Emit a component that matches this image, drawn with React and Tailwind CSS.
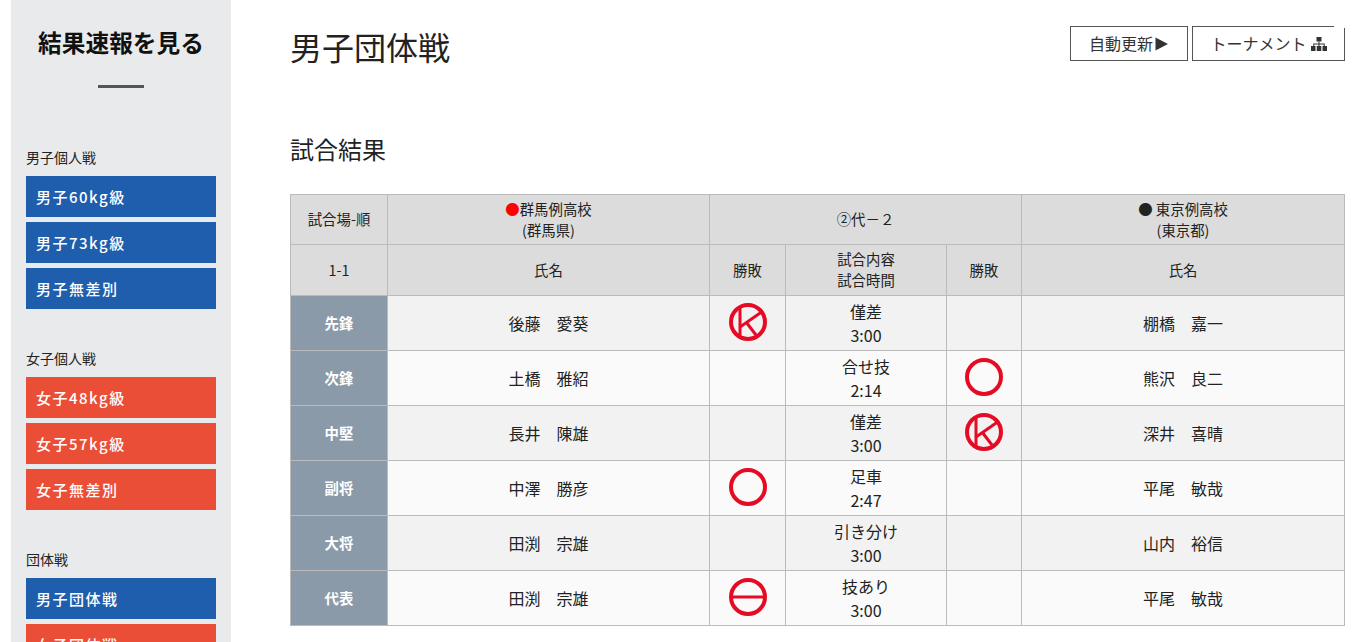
import React from "react";

const JP = "font-['Noto_Sans_CJK_JP','Noto_Sans',sans-serif]";

const groups = [
  {
    label: "男子個人戦",
    items: [
      ["男子60kg級", "bg-[#1f5dad]"],
      ["男子73kg級", "bg-[#1f5dad]"],
      ["男子無差別", "bg-[#1f5dad]"],
    ],
  },
  {
    label: "女子個人戦",
    items: [
      ["女子48kg級", "bg-[#eb4e36]"],
      ["女子57kg級", "bg-[#eb4e36]"],
      ["女子無差別", "bg-[#eb4e36]"],
    ],
  },
  {
    label: "団体戦",
    items: [
      ["男子団体戦", "bg-[#1f5dad]"],
      ["女子団体戦", "bg-[#eb4e36]"],
    ],
  },
];

const rows = [
  ["先鋒", "後藤　愛葵", "k", "僅差", "3:00", "", "棚橋　嘉一"],
  ["次鋒", "土橋　雅紹", "", "合せ技", "2:14", "o", "熊沢　良二"],
  ["中堅", "長井　陳雄", "", "僅差", "3:00", "k", "深井　喜晴"],
  ["副将", "中澤　勝彦", "o", "足車", "2:47", "", "平尾　敏哉"],
  ["大将", "田渕　宗雄", "", "引き分け", "3:00", "", "山内　裕信"],
  ["代表", "田渕　宗雄", "m", "技あり", "3:00", "", "平尾　敏哉"],
];

function Mark({ type }) {
  if (!type) return null;
  return (
    <svg width="38" height="38" viewBox="0 0 38 38" fill="none" stroke="#e60b25" className="block mx-auto -translate-y-px">
      <circle cx="19" cy="19" r="17" strokeWidth="4" />
      {type === "k" && (
        <g strokeWidth="3">
          <path d="M11 4V34" />
          <path d="M11 24L34 8" />
          <path d="M17 19L27 32" />
        </g>
      )}
      {type === "m" && <path d="M2 19H36" strokeWidth="3" />}
    </svg>
  );
}

function Sidebar() {
  return (
    <aside className="w-[220px] shrink-0 bg-[#e9eaec] h-[900px]">
      <h2 className="pt-[24px] text-center text-[23.7px] leading-[36px] font-bold text-[#111]">結果速報を見る</h2>
      <div className="mt-[25px] mx-auto w-[46px] h-[3px] bg-[#555]"></div>
      <div className="mt-[59px] px-[15px] flex flex-col gap-[39px]">
        {groups.map((g) => (
          <div key={g.label}>
            <p className="text-[14px] leading-[21px] text-[#222]">{g.label}</p>
            <ul className="mt-[8px] flex flex-col gap-[5px]">
              {g.items.map(([name, color]) => (
                <li
                  key={name}
                  className={`${color} h-[41px] pl-[10px] pt-[1px] flex items-center text-white text-[15px] font-medium tracking-[1.5px]`}
                >
                  {name}
                </li>
              ))}
            </ul>
          </div>
        ))}
      </div>
    </aside>
  );
}

function Results() {
  const th = "border border-[#bbb] font-normal text-[14.4px] leading-[21px] p-0 pb-[2px] text-center";
  const td = "border border-[#bbb] text-[16px] leading-[24px] p-0 text-center";
  return (
    <table className="mt-[27px] w-[1054px] table-fixed border-collapse text-[#222]">
      <colgroup>
        <col className="w-[97px]" />
        <col className="w-[322px]" />
        <col className="w-[76px]" />
        <col className="w-[161px]" />
        <col className="w-[75px]" />
        <col className="w-[323px]" />
      </colgroup>
      <thead className="bg-[#dcdcdc]">
        <tr className="h-[50px]">
          <th className={th}>試合場-順</th>
          <th className={th}>
            <span className="text-[#f00]">●</span>群馬例高校
            <br />
            (群馬県)
          </th>
          <th className={th} colSpan={3}>
            ②代－２
          </th>
          <th className={th}>
            ● 東京例高校
            <br />
            (東京都)
          </th>
        </tr>
        <tr className="h-[51px]">
          <th className={th}>1-1</th>
          <th className={th}>氏名</th>
          <th className={th}>勝敗</th>
          <th className={th}>
            試合内容
            <br />
            試合時間
          </th>
          <th className={th}>勝敗</th>
          <th className={th}>氏名</th>
        </tr>
      </thead>
      <tbody>
        {rows.map((r, i) => (
          <tr key={r[0]} className={`h-[55px] ${i % 2 === 0 ? "bg-[#f2f2f2]" : "bg-[#fafafa]"}`}>
            <td className="border border-[#bbb] text-[14.4px] leading-[21px] p-0 pb-[2px] text-center bg-[#8a9aa9] text-white font-bold">
              {r[0]}
            </td>
            <td className={td}>{r[1]}</td>
            <td className={td}>
              <Mark type={r[2]} />
            </td>
            <td className={td}>
              {r[3]}
              <br />
              {r[4]}
            </td>
            <td className={td}>
              <Mark type={r[5]} />
            </td>
            <td className={td}>{r[6]}</td>
          </tr>
        ))}
      </tbody>
    </table>
  );
}

export default function App() {
  return (
    <div className={`${JP} h-[642px] overflow-hidden bg-white flex pl-[11px]`}>
      <Sidebar />
      <main className="ml-[59px] w-[1055px] shrink-0">
        <div className="flex items-start justify-between">
          <h1 className="pt-[22px] text-[32px] leading-[48px] font-normal text-[#222]">男子団体戦</h1>
          <div className="mt-[26px] flex gap-[4px] text-[16px] text-[#333]">
            <button className="w-[118px] h-[35px] pb-[2px] border border-[#555] flex items-center justify-center">
              自動更新
              <svg width="14" height="14" viewBox="0 0 14 14" className="ml-[2px] mt-[2px]">
                <path d="M0.5 0.5L13 7L0.5 13.5Z" fill="#333" />
              </svg>
            </button>
            <button className="relative w-[153px] h-[35px] pb-[2px] border border-[#555] flex items-center justify-center">
              トーナメント
              <svg width="16" height="14" viewBox="0 0 16 14" className="ml-[4px] mt-[2px]" fill="#333">
                <rect x="5.5" y="0" width="5" height="4.5" />
                <rect x="0" y="9" width="4.5" height="5" />
                <rect x="5.75" y="9" width="4.5" height="5" />
                <rect x="11.5" y="9" width="4.5" height="5" />
                <path d="M7.5 4.5h1V6.5h5.25V9h-1V7.5H8.5V9h-1V7.5H3.25V9h-1V6.5H7.5Z" />
              </svg>
              <span className="absolute -top-px -right-px w-[11px] h-[2px] bg-white"></span>
            </button>
          </div>
        </div>
        <h2 className="mt-[61px] text-[24px] leading-[36px] font-normal text-[#222]">試合結果</h2>
        <Results />
      </main>
    </div>
  );
}
